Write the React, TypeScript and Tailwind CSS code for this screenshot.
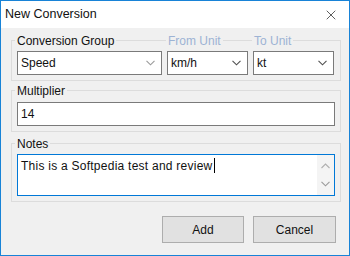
import { X } from "lucide-react";

const font = { fontFamily: '"Liberation Sans", Arial, sans-serif' };

function Chevron({ light }: { light?: boolean }) {
  return (
    <svg width="9" height="6" viewBox="0 0 9 6" className="shrink-0 block">
      <path d="M0.5 0.8 L4.5 4.8 L8.5 0.8" fill="none" stroke={light ? "#9a9a9a" : "#505050"} strokeWidth="1.1" />
    </svg>
  );
}

function Combo({ value, width, light }: { value: string; width: string; light?: boolean }) {
  return (
    <div className={`${width} h-[24px] bg-white border border-[#7a7a7a] flex items-center pl-[3px] pr-[6px]`}>
      <span className="flex-1 text-[12px] leading-[16px] text-[#111]">{value}</span>
      <Chevron light={light} />
    </div>
  );
}

function Label({ text, muted, shift }: { text: string; muted?: boolean; shift: string }) {
  return (
    <div
      className={`w-fit bg-[#f0f0f0] px-[2px] h-[16px] leading-[16px] text-[12px] ${shift} ${
        muted ? "text-[#9db3d4]" : "text-[#111]"
      }`}
    >
      {text}
    </div>
  );
}

export default function App() {
  return (
    <div className="w-[350px] h-[256px] border border-[#1883d7] bg-[#f0f0f0] flex flex-col overflow-hidden" style={font}>
      {/* title bar */}
      <div className="h-[27px] bg-white flex items-center pl-[4px] pr-[10px] shrink-0">
        <span className="flex-1 text-[12.5px] text-[#111]">New Conversion</span>
        <X className="w-[16px] h-[16px] text-[#222]" strokeWidth={1.1} />
      </div>

      <div className="flex flex-col pl-[10px] pr-[8px] pt-[12px]">
        {/* conversion group */}
        <div className="border border-[#dcdcdc] px-[5px] pb-[5px]">
          <div className="flex gap-[5px] -mt-[8px]">
            <div className="w-[145px] flex flex-col">
              <Label text="Conversion Group" shift="-ml-[2px]" />
              <div className="mt-[2px]"><Combo value="Speed" width="w-[145px]" light /></div>
            </div>
            <div className="w-[81px] flex flex-col">
              <Label text="From Unit" muted shift="-ml-[1px]" />
              <div className="mt-[2px]"><Combo value="km/h" width="w-[81px]" /></div>
            </div>
            <div className="w-[81px] flex flex-col">
              <Label text="To Unit" muted shift="-ml-[1px]" />
              <div className="mt-[2px]"><Combo value="kt" width="w-[81px]" /></div>
            </div>
          </div>
        </div>

        {/* multiplier */}
        <div className="mt-[9px] border border-[#dcdcdc] px-[5px] pb-[5px]">
          <Label text="Multiplier" shift="-mt-[8px] -ml-[2px]" />
          <div className="mt-[3px] h-[24px] bg-white border border-[#7a7a7a] flex items-center pl-[3px] text-[12px] leading-[16px] text-[#111]">
            14
          </div>
        </div>

        {/* notes */}
        <div className="mt-[11px] border border-[#dcdcdc] px-[5px] pb-[5px]">
          <Label text="Notes" shift="-mt-[8px] -ml-[2px]" />
          <div className="mt-[2px] h-[42px] bg-white border border-[#0078d7] flex">
            <div className="flex-1 pl-[3px] pt-[3px] text-[12px] leading-[16px] tracking-[0.25px] text-[#111] flex items-start">
              <span>This is a Softpedia test and review</span>
              <span className="w-[1px] h-[15px] bg-black ml-[1px]" />
            </div>
            <div className="w-[17px] bg-[#f4f4f4] flex flex-col items-center justify-between py-[8px]">
              <svg width="9" height="6" viewBox="0 0 9 6" className="block">
                <path d="M0.5 5 L4.5 1 L8.5 5" fill="none" stroke="#b0b0b0" strokeWidth="1.1" />
              </svg>
              <Chevron light />
            </div>
          </div>
        </div>

        {/* buttons */}
        <div className="mt-[14px] flex justify-end gap-[9px] pr-[5px]">
          <button className="w-[82px] h-[27px] bg-[#e1e1e1] border border-[#adadad] text-[12px] leading-[16px] text-[#111]">Add</button>
          <button className="w-[83px] h-[27px] bg-[#e1e1e1] border border-[#adadad] text-[12px] leading-[16px] text-[#111]">Cancel</button>
        </div>
      </div>
    </div>
  );
}
